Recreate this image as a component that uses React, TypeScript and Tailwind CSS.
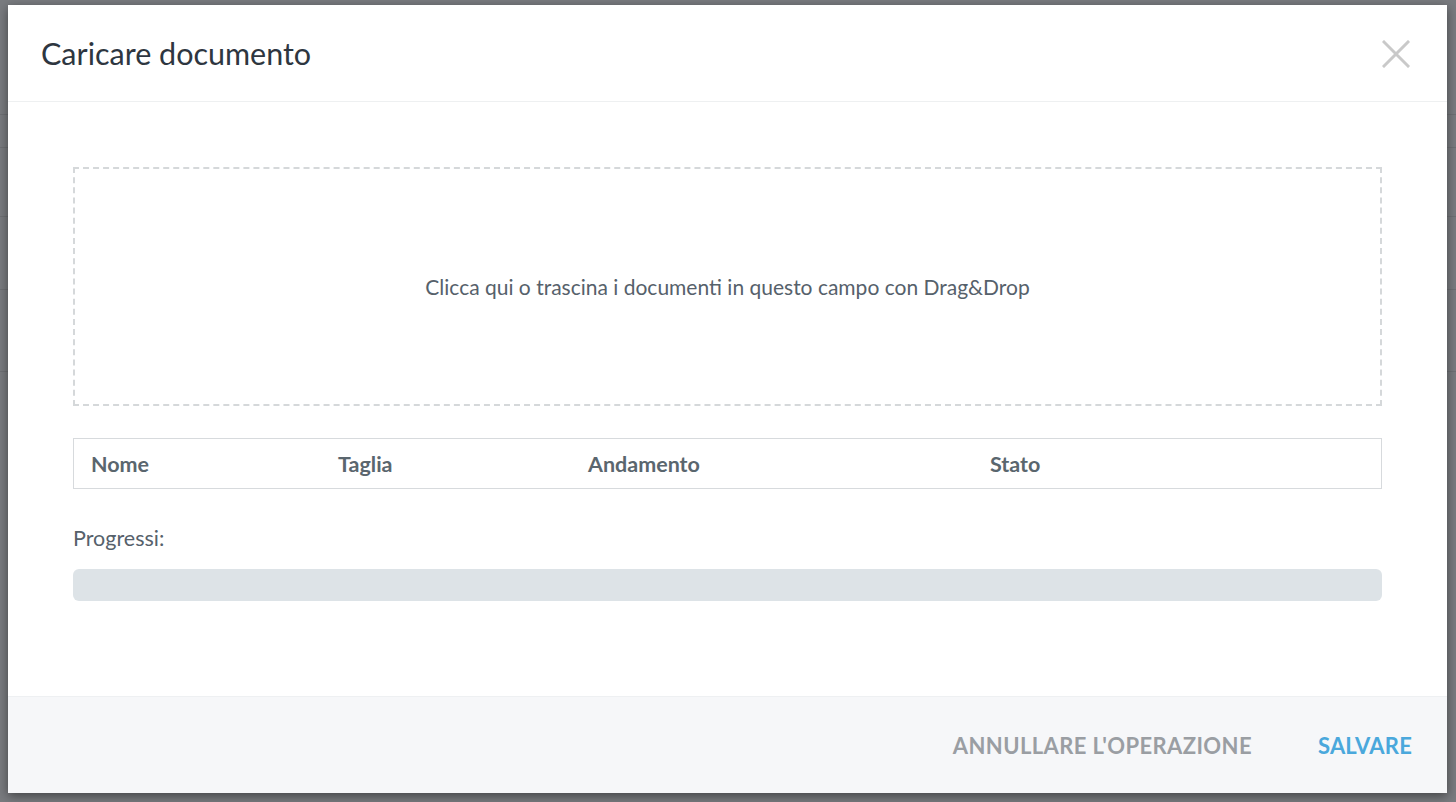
import React from "react";

const columns = [
  { label: "Nome", width: "w-[247px]" },
  { label: "Taglia", width: "w-[250px]" },
  { label: "Andamento", width: "w-[402px]" },
  { label: "Stato", width: "flex-1" },
];

function CloseIcon() {
  return (
    <svg width="28" height="28" viewBox="0 0 28 28" fill="none">
      <path
        d="M2 2L26 26M26 2L2 26"
        stroke="#c9c9c9"
        strokeWidth="3"
        strokeLinecap="square"
      />
    </svg>
  );
}

function UploadModal() {
  return (
    <div className="flex h-[788px] w-[1439px] flex-col bg-white shadow-[0_3px_10px_rgba(0,0,0,0.45)]">
      <div className="flex h-[97px] shrink-0 items-center justify-between border-b border-[#eef0f1] pl-[33px] pr-[37px]">
        <h1 className="pb-[1px] text-[30.5px] leading-[36px] font-normal text-[#2e3640]">
          Caricare documento
        </h1>
        <button className="mt-[2px]">
          <CloseIcon />
        </button>
      </div>

      <div className="flex flex-1 flex-col px-[65px] pt-[65px]">
        <div className="flex h-[239px] cursor-pointer items-center justify-center border-2 border-dashed border-[#d5d8da]">
          <p className="text-[21px] leading-[28px] text-[#56616b]">
            Clicca qui o trascina i documenti in questo campo con Drag&amp;Drop
          </p>
        </div>

        <div className="mt-[32px] flex h-[51px] items-center border border-[#d7dadd]">
          {columns.map((c) => (
            <div
              key={c.label}
              className={`${c.width} pl-[17px] text-[21.5px] leading-[28px] font-bold text-[#5a666e]`}
            >
              {c.label}
            </div>
          ))}
        </div>

        <div className="mt-[35px] text-[21.5px] leading-[28px] text-[#56616b]">
          Progressi:
        </div>

        <div className="mt-[17px] h-[32px] w-full rounded-[6px] bg-[#dde3e7]" />
      </div>

      <div className="flex h-[97px] shrink-0 items-center justify-end gap-[66px] border-t border-[#eef0f2] bg-[#f6f7f9] pr-[35px]">
        <button className="text-[22px] font-bold tracking-[0.4px] text-[#9a9ea3]">
          ANNULLARE L'OPERAZIONE
        </button>
        <button className="text-[22px] font-bold tracking-[0.2px] text-[#4aa8dc]">
          SALVARE
        </button>
      </div>
    </div>
  );
}

export default function App() {
  return (
    <div
      className="relative h-[802px] w-[1456px] overflow-hidden bg-white"
      style={{ fontFamily: "Lato, 'Noto Sans', sans-serif" }}
    >
      {/* page behind the overlay */}
      <div className="flex flex-col">
        <div className="h-[115px] border-b border-[#e4e4e4]" />
        <div className="h-[33px] border-b border-[#e4e4e4]" />
        <div className="h-[69px] border-b border-[#e4e4e4]" />
        <div className="h-[73px] border-b border-[#e4e4e4]" />
        <div className="h-[82px] border-b border-[#e4e4e4]" />
      </div>

      <div className="absolute inset-0 bg-[#1f2329]/60 pl-[8px] pt-[5px]">
        <UploadModal />
      </div>
    </div>
  );
}
